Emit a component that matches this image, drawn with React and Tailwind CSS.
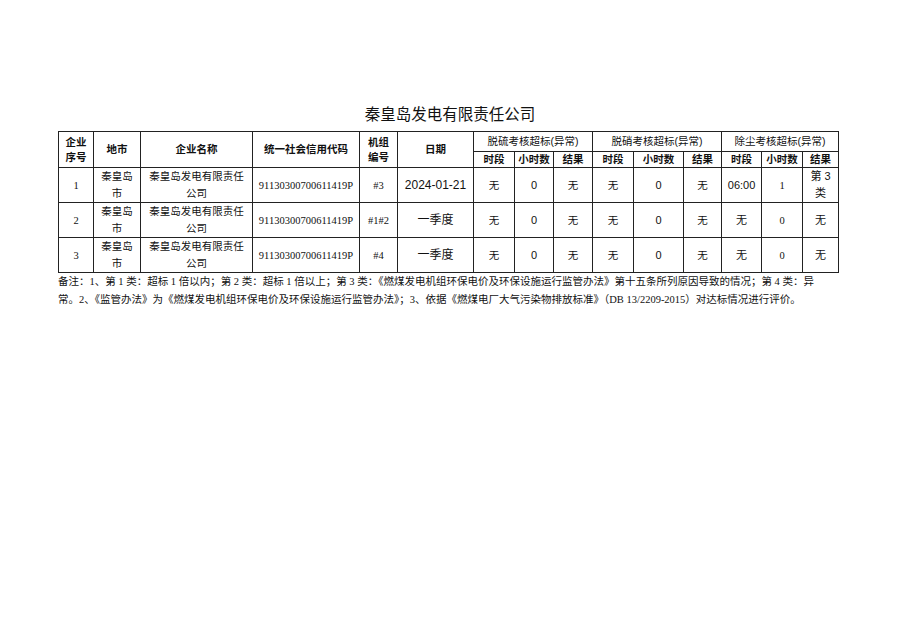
const serif = "font-['Liberation_Serif','Noto_Sans_CJK_SC',serif]";
const sans = "font-['Liberation_Sans','Noto_Sans_CJK_SC',sans-serif]";

const rows = [
  { no: "1", unit: "#3", date: "2024-01-21", dcTime: "06:00", dcHours: "1", dcResult: ["第 3", "类"] },
  { no: "2", unit: "#1#2", date: "一季度", dcTime: "无", dcHours: "0", dcResult: ["无"] },
  { no: "3", unit: "#4", date: "一季度", dcTime: "无", dcHours: "0", dcResult: ["无"] },
];

const widths = [35, 47, 112, 107, 38, 76, 41, 39, 39, 41, 50, 38, 40, 41, 36];

function Th({ children, ...rest }) {
  return (
    <th
      {...rest}
      className="border border-[#222] font-bold text-[10.5px] leading-[15px] text-center align-middle p-0"
    >
      {children}
    </th>
  );
}

function Td({ children, className = "" }) {
  return (
    <td className={`border border-[#222] text-[10.5px] leading-[17px] text-center align-middle p-0 h-[35px] ${className}`}>
      {children}
    </td>
  );
}

export default function App() {
  return (
    <div className={`w-[900px] h-[636px] bg-white text-[#111] ${sans}`}>
      <div className="pt-[105px] px-[58px]">
        <h1 className={`text-center text-[15.5px] leading-[20px] font-normal mb-[6px] ${serif}`}>
          秦皇岛发电有限责任公司
        </h1>

        <table className="border-collapse table-fixed w-[780px]">
          <colgroup>
            {widths.map((w, i) => (
              <col key={i} style={{ width: w }} />
            ))}
          </colgroup>
          <thead>
            <tr className="h-[20px]">
              <Th rowSpan={2}>企业<br />序号</Th>
              <Th rowSpan={2}>地市</Th>
              <Th rowSpan={2}>企业名称</Th>
              <Th rowSpan={2}>统一社会信用代码</Th>
              <Th rowSpan={2}>机组<br />编号</Th>
              <Th rowSpan={2}>日期</Th>
              <th colSpan={3} className="border border-[#222] font-normal text-[10.5px] leading-[15px] text-center p-0">脱硫考核超标(异常)</th>
              <th colSpan={3} className="border border-[#222] font-normal text-[10.5px] leading-[15px] text-center p-0">脱硝考核超标(异常)</th>
              <th colSpan={3} className="border border-[#222] font-normal text-[10.5px] leading-[15px] text-center p-0">除尘考核超标(异常)</th>
            </tr>
            <tr className="h-[15px]">
              <Th>时段</Th>
              <Th>小时数</Th>
              <Th>结果</Th>
              <Th>时段</Th>
              <Th>小时数</Th>
              <Th>结果</Th>
              <Th>时段</Th>
              <Th>小时数</Th>
              <Th>结果</Th>
            </tr>
          </thead>
          <tbody>
            {rows.map((r) => (
              <tr key={r.no}>
                <Td className={serif}>{r.no}</Td>
                <Td>秦皇岛<br />市</Td>
                <Td>秦皇岛发电有限责任<br />公司</Td>
                <Td className={serif}>91130300700611419P</Td>
                <Td className={serif}>{r.unit}</Td>
                <Td className="text-[12px]">{r.date}</Td>
                <Td>无</Td>
                <Td className="text-[11px]">0</Td>
                <Td>无</Td>
                <Td>无</Td>
                <Td className="text-[11px]">0</Td>
                <Td>无</Td>
                <Td className="text-[11px]">{r.dcTime}</Td>
                <Td className={serif}>{r.dcHours}</Td>
                <Td className="text-[11px]">
                  {r.dcResult.map((t, i) => (
                    <div key={i}>{t}</div>
                  ))}
                </Td>
              </tr>
            ))}
          </tbody>
        </table>

        <div className={`text-[10.5px] leading-[18px] whitespace-nowrap ${serif}`}>
          <div>
            备注：1、第 1 类：超标 1 倍以内；第 2 类：超标 1 倍以上；第 3 类：《燃煤发电机组环保电价及环保设施运行监管办法》第十五条所列原因导致的情况；第 4 类：异
          </div>
          <div>
            常。2、《监管办法》为《燃煤发电机组环保电价及环保设施运行监管办法》；3、依据《燃煤电厂大气污染物排放标准》（DB 13/2209-2015）对达标情况进行评价。
          </div>
        </div>
      </div>
    </div>
  );
}
